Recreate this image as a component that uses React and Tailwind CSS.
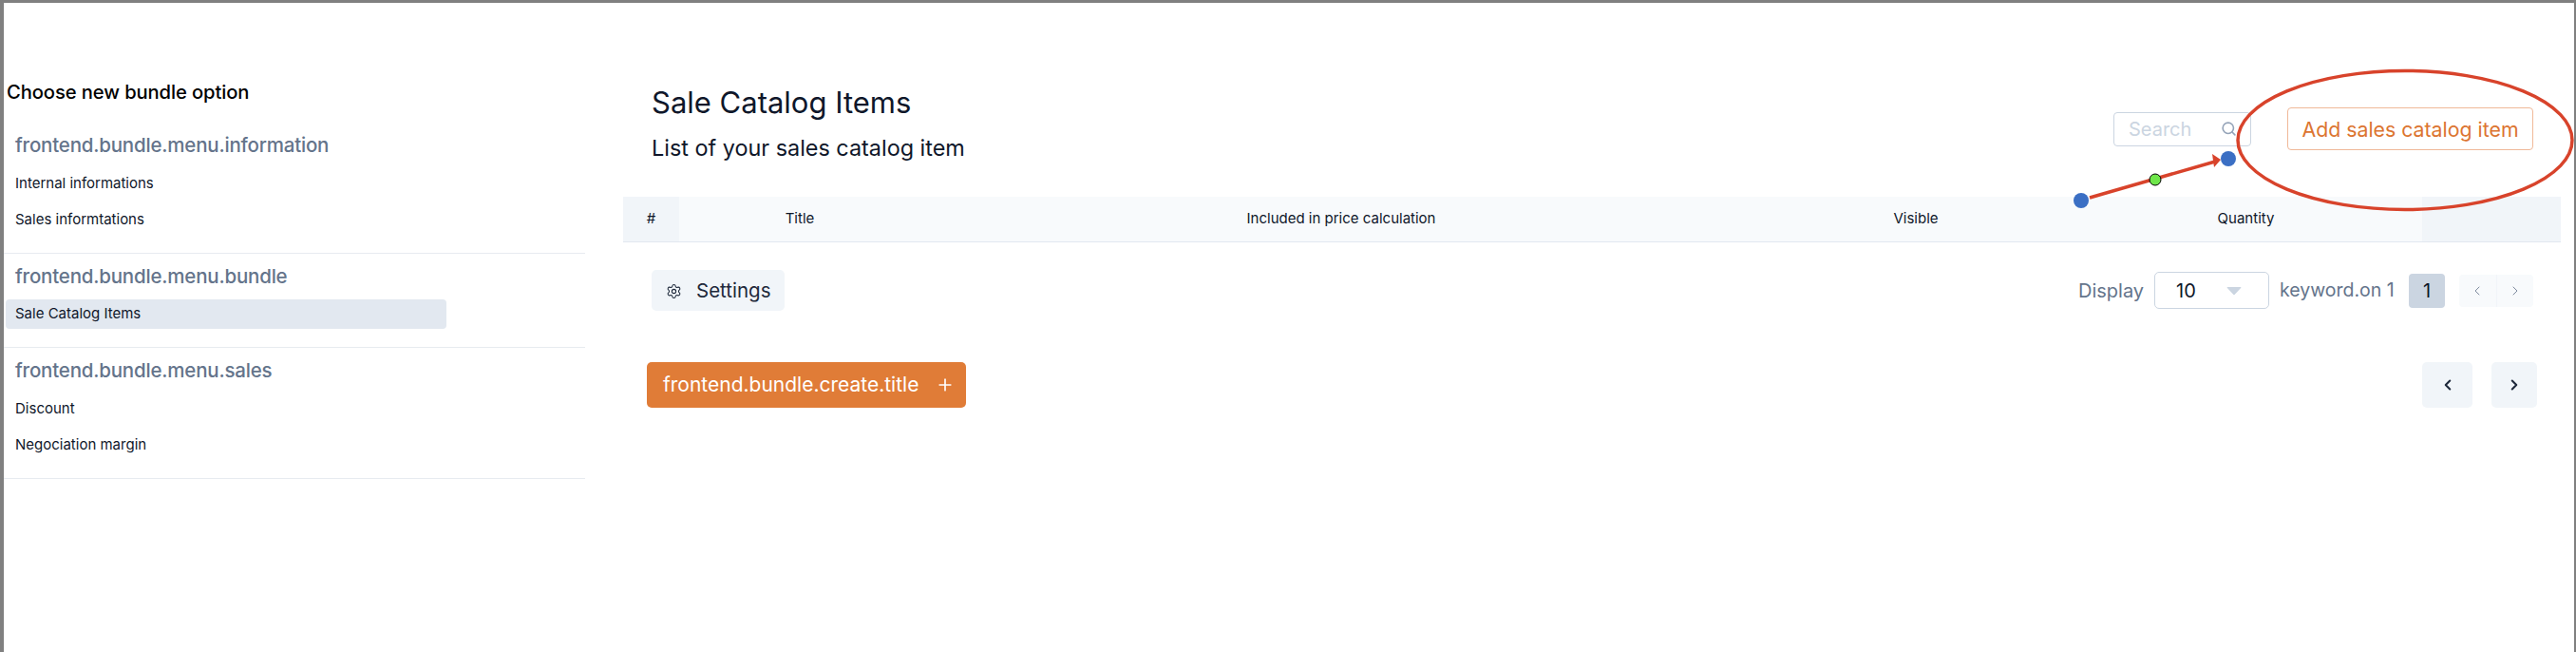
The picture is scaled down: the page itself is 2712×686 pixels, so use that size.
import { ChevronLeft, ChevronRight, Plus, Search, Settings } from 'lucide-react'

const FONT = "font-['Inter','Noto_Sans',sans-serif]"

const MenuItem = ({ label, active }) => (
  <div className={active
    ? 'ml-[2px] flex h-[31px] w-[464px] items-center rounded-[4px] bg-[#e2e8f0] pl-[10px] text-[15px] text-[#0f172a]'
    : 'flex h-[38px] items-center pl-[12px] text-[15px] text-[#0f172a]'}>
    {label}
  </div>
)

const MenuHeading = ({ children }) => (
  <h3 className="h-[30px] pl-[12px] text-[20.5px] leading-[30px] font-medium tracking-[-0.2px] text-[#64748b]">{children}</h3>
)

function Sidebar() {
  return (
    <aside className="w-[652px] shrink-0 pt-[80px]">
      <h2 className="h-[28px] pl-[3px] text-[20.2px] leading-[28px] font-medium tracking-[-0.1px] text-black">Choose new bundle option</h2>
      <div className="w-[612px]">
        <section className="mt-[27px] border-b border-[#e7ebf0] pb-[16px]">
          <MenuHeading>frontend.bundle.menu.information</MenuHeading>
          <div className="mt-[6px]">
            <MenuItem label="Internal informations" />
            <MenuItem label="Sales informtations" />
          </div>
        </section>
        <section className="border-b border-[#e7ebf0] pt-[9px] pb-[19px]">
          <MenuHeading>frontend.bundle.menu.bundle</MenuHeading>
          <div className="mt-[9px]">
            <MenuItem label="Sale Catalog Items" active />
          </div>
        </section>
        <section className="border-b border-[#e7ebf0] pt-[9px] pb-[16px]">
          <MenuHeading>frontend.bundle.menu.sales</MenuHeading>
          <div className="mt-[6px]">
            <MenuItem label="Discount" />
            <MenuItem label="Negociation margin" />
          </div>
        </section>
      </div>
    </aside>
  )
}

function TableHead() {
  return (
    <div className="flex h-[48px] border-b border-[#e2e8f0] bg-[#f8fafc] text-center text-[15px] text-[#0f172a]">
      <div className="flex w-[59px] items-center justify-center bg-[#f1f5f9]">#</div>
      <div className="flex w-[254px] items-center justify-center">Title</div>
      <div className="flex w-[886px] items-center justify-center">Included in price calculation</div>
      <div className="flex w-[324px] items-center justify-center">Visible</div>
      <div className="flex w-[371px] items-center justify-center">Quantity</div>
      <div className="flex-1 bg-[#f1f5f9]" />
    </div>
  )
}

function Pager() {
  return (
    <div className="flex items-center text-[20px] whitespace-nowrap text-[#64748b]">
      <span className="w-[80px]">Display</span>
      <div className="flex h-[39px] w-[121px] items-center justify-between rounded-[5px] border border-[#cbd5e1] pr-[28px] pl-[22px] text-[#0f172a]">
        <span>10</span>
        <svg width="16" height="10" viewBox="0 0 16 10"><path d="M1 1.5h14L8 9z" fill="#cbd5e1" stroke="#cbd5e1" strokeLinejoin="round" /></svg>
      </div>
      <span className="ml-[11px] w-[136px] text-[19.5px]">keyword.on 1</span>
      <div className="flex h-[36px] w-[38px] items-center justify-center rounded-[4px] bg-[#cbd5e1] text-[#0f172a]">1</div>
      <div className="ml-[15px] flex h-[34px] w-[78px] rounded-[4px] bg-[#f8fafc]">
        <div className="flex flex-1 items-center justify-center border-r border-[#f1f5f9]"><ChevronLeft size={16} strokeWidth={1.25} color="#64748b" /></div>
        <div className="flex flex-1 items-center justify-center"><ChevronRight size={16} strokeWidth={1.25} color="#64748b" /></div>
      </div>
    </div>
  )
}

function Annotations() {
  return (
    <svg className="pointer-events-none absolute top-0 left-0" width="2712" height="686" viewBox="0 0 2712 686">
      <ellipse cx="2532" cy="147.5" rx="176" ry="73" fill="none" stroke="#d8432b" strokeWidth="3.5" />
      <line x1="2200" y1="208" x2="2332" y2="170" stroke="#d8432b" strokeWidth="3.5" />
      <path d="M2338 168l-9-6 2 14z" fill="#d8432b" />
      <circle cx="2191" cy="211" r="8" fill="#3b6fc4" />
      <circle cx="2346" cy="167" r="8" fill="#3b6fc4" />
      <circle cx="2269" cy="189" r="6" fill="#6ee64a" stroke="#000" strokeWidth="1" />
    </svg>
  )
}

export default function App() {
  return (
    <div className={`relative h-[686px] w-[2712px] overflow-hidden bg-white ${FONT}`}>
      <div className="flex h-full border-t-[3px] border-r-2 border-l-4 border-[#808080]">
        <Sidebar />
        <main className="min-w-0 flex-1 pr-[14px]">
          <div className="flex justify-between pt-[85px] pr-[29px] pl-[30px]">
            <div>
              <h1 className="h-[40px] text-[31px] leading-[40px] text-[#0f172a]">Sale Catalog Items</h1>
              <p className="mt-[12px] h-[32px] text-[23.4px] leading-[32px] text-[#0f172a]">List of your sales catalog item</p>
            </div>
            <div className="mt-[25px] flex items-center gap-[38px] self-start">
              <div className="flex h-[36px] w-[145px] items-center justify-between rounded-[4px] border border-[#cbd5e1] pr-[14px] pl-[15px] text-[20px] text-[#cbd5e1]">
                <span>Search</span>
                <Search size={17} strokeWidth={2.25} color="#94a3b8" />
              </div>
              <button className="flex h-[45px] w-[259px] items-center justify-center rounded-[4px] border border-[#f0b999] pt-[2px] text-[21.3px] text-[#dc7531]">Add sales catalog item</button>
            </div>
          </div>
          <div className="mt-[35px]">
            <TableHead />
          </div>
          <div className="mt-[29px] flex items-center justify-between pr-[29px] pl-[30px]">
            <button className="flex h-[43px] w-[140px] items-center gap-[15px] rounded-[5px] bg-[#f1f5f9] pt-[2px] pl-[15px] text-[20.5px] text-[#1e293b]">
              <Settings size={17} strokeWidth={1.5} />
              Settings
            </button>
            <Pager />
          </div>
          <div className="mt-[54px] flex items-center justify-between pr-[25px] pl-[25px]">
            <button className="flex h-[48px] w-[336px] items-center rounded-[5px] bg-[#e07c37] pl-[17px] text-[21px] text-white">
              frontend.bundle.create.title
              <Plus size={20} strokeWidth={2} className="ml-[18px]" />
            </button>
            <div className="flex gap-[20px]">
              <div className="flex h-[48px] w-[53px] items-center justify-center rounded-[5px] bg-[#f1f5f9]"><ChevronLeft size={18} strokeWidth={2.75} color="#1e293b" /></div>
              <div className="flex h-[48px] w-[48px] items-center justify-center rounded-[5px] bg-[#f1f5f9]"><ChevronRight size={18} strokeWidth={2.75} color="#1e293b" /></div>
            </div>
          </div>
        </main>
      </div>
      <Annotations />
    </div>
  )
}
